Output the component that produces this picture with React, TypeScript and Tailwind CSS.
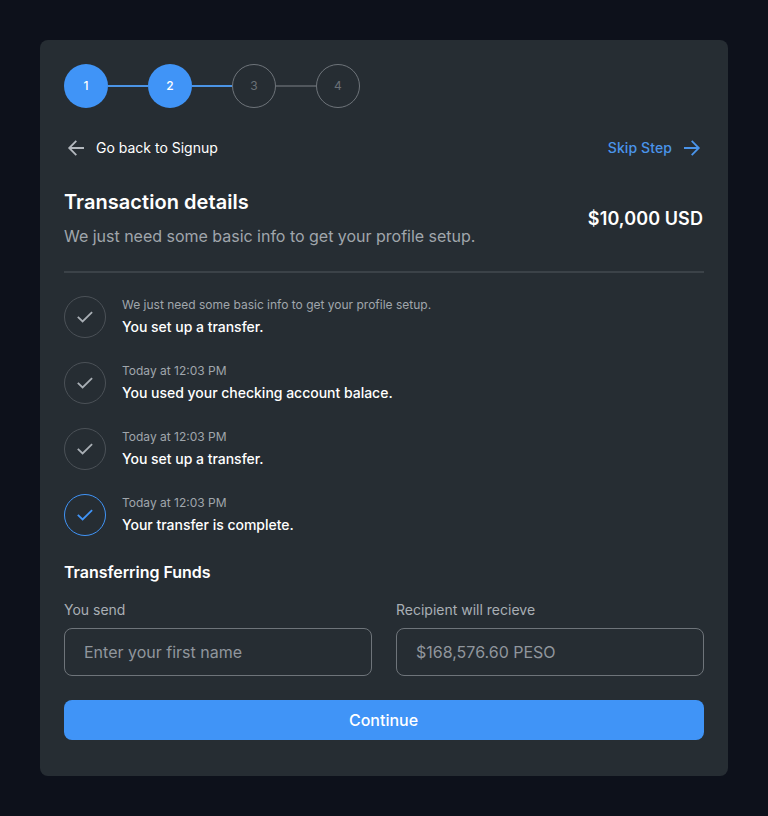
const steps = [
  { n: 1, on: true },
  { n: 2, on: true },
  { n: 3, on: false },
  { n: 4, on: false },
];

const events = [
  { meta: 'We just need some basic info to get your profile setup.', text: 'You set up a transfer.' },
  { meta: 'Today at 12:03 PM', text: 'You used your checking account balace.' },
  { meta: 'Today at 12:03 PM', text: 'You set up a transfer.' },
  { meta: 'Today at 12:03 PM', text: 'Your transfer is complete.', current: true },
];

function Field({ label, placeholder }: { label: string; placeholder: string }) {
  return (
    <label className="flex flex-1 flex-col">
      <span className="text-sm leading-5 text-[#a9afb5]">{label}</span>
      <input
        placeholder={placeholder}
        className="mt-2 h-12 w-full rounded-lg border border-[#6e747a] bg-transparent px-[19px] text-base text-white outline-none placeholder:text-[#90969d]"
      />
    </label>
  );
}

export default function App() {
  return (
    <div className="h-[816px] bg-[#0d111b] p-10 font-['Inter',sans-serif] text-white">
      <main className="flex h-[736px] flex-col rounded-lg bg-[#262d33] p-6">
        <ol className="flex items-center">
          {steps.map((s, i) => (
            <li key={s.n} className="flex items-center">
              {i > 0 && <span className={`h-0.5 w-10 ${i < 3 ? 'bg-[#4b94e6]' : 'bg-[#51575d]'}`} />}
              <span
                className={`flex size-11 items-center justify-center rounded-full text-xs ${
                  s.on ? 'bg-[#4094f7] font-medium' : 'border border-[#6e747a] text-[#6a7076]'
                }`}
              >
                {s.n}
              </span>
            </li>
          ))}
        </ol>

        <nav className="mt-7 flex h-6 items-center justify-between text-sm">
          <button className="flex items-center gap-2">
            <svg width="24" height="24" viewBox="0 0 24 24" fill="none" stroke="#b3b8be" strokeWidth="1.8">
              <path d="M20 12H5.5M12.3 4.9L5.2 12L12.3 19.1" />
            </svg>
            Go back to Signup
          </button>
          <button className="flex items-center gap-2 font-medium tracking-[0.1px] text-[#4a94ea]">
            Skip Step
            <svg width="24" height="24" viewBox="0 0 24 24" fill="none" stroke="currentColor" strokeWidth="1.8">
              <path d="M4 12H18.5M11.7 4.9L18.8 12L11.7 19.1" />
            </svg>
          </button>
        </nav>

        <header className="mt-7 flex items-center justify-between border-b-2 border-[#3b4248] pb-[23px]">
          <div>
            <h1 className="text-xl leading-7 font-semibold tracking-[0.05px]">Transaction details</h1>
            <p className="mt-2 text-base leading-6 tracking-[-0.015px] text-[#a0a6ac]">We just need some basic info to get your profile setup.</p>
          </div>
          <strong className="mt-0.5 mr-px text-lg font-semibold tracking-[0.1px]">$10,000 USD</strong>
        </header>

        <ul className="mt-[23px] flex flex-col gap-6">
          {events.map((e, i) => (
            <li key={i} className="flex h-[42px] items-center gap-4">
              <span className={`flex size-[42px] items-center justify-center rounded-full border ${e.current ? 'border-[#4094f7] text-[#4094f7]' : 'border-[#4b5157] text-[#a9afb5]'}`}>
                <svg width="24" height="24" viewBox="0 0 24 24" fill="none" stroke="currentColor" strokeWidth="1.8">
                  <path d="M4.8 11.8L9.6 16.4L19.1 7.2" />
                </svg>
              </span>
              <div>
                <p className="text-xs leading-[18px] text-[#a0a6ac]">{e.meta}</p>
                <p className="mt-0.5 text-sm leading-[22px] font-medium tracking-[-0.015px]">{e.text}</p>
              </div>
            </li>
          ))}
        </ul>

        <h2 className="mt-6 text-base leading-6 font-semibold tracking-[-0.04px]">Transferring Funds</h2>
        <div className="mt-4 flex gap-6">
          <Field label="You send" placeholder="Enter your first name" />
          <Field label="Recipient will recieve" placeholder="$168,576.60 PESO" />
        </div>
        <button className="mt-6 h-10 rounded-lg bg-[#4094f7] pr-px text-base font-medium">Continue</button>
      </main>
    </div>
  );
}
